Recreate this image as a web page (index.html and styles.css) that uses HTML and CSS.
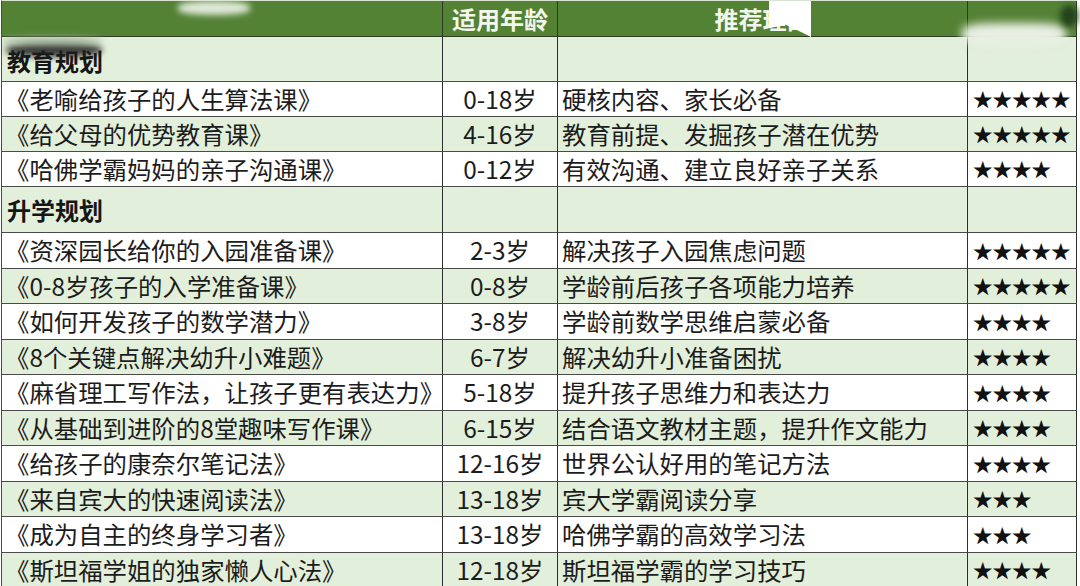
FILE: index.html
```html
<!DOCTYPE html>
<html lang="zh-CN">
<head>
<meta charset="utf-8">
<title>课程推荐表</title>
<link rel="stylesheet" href="styles.css">
</head>
<body>
<div class="sheet">
  <div class="row head">
    <div class="cell"></div>
    <div class="cell c">适用年龄</div>
    <div class="cell c">推荐理由</div>
    <div class="cell"></div>
  </div>

  <div class="row sec first">
    <div class="cell t">教育规划</div>
    <div class="cell"></div>
    <div class="cell"></div>
    <div class="cell"></div>
  </div>
  <div class="row r1 w">
    <div class="cell n">《老喻给孩子的人生算法课》</div>
    <div class="cell c">0-18岁</div>
    <div class="cell d">硬核内容、家长必备</div>
    <div class="cell s">★★★★★</div>
  </div>
  <div class="row r1 g">
    <div class="cell n">《给父母的优势教育课》</div>
    <div class="cell c">4-16岁</div>
    <div class="cell d">教育前提、发掘孩子潜在优势</div>
    <div class="cell s">★★★★★</div>
  </div>
  <div class="row r1 w">
    <div class="cell n">《哈佛学霸妈妈的亲子沟通课》</div>
    <div class="cell c">0-12岁</div>
    <div class="cell d">有效沟通、建立良好亲子关系</div>
    <div class="cell s">★★★★</div>
  </div>

  <div class="row sec">
    <div class="cell t">升学规划</div>
    <div class="cell"></div>
    <div class="cell"></div>
    <div class="cell"></div>
  </div>
  <div class="row r2 w">
    <div class="cell n">《资深园长给你的入园准备课》</div>
    <div class="cell c">2-3岁</div>
    <div class="cell d">解决孩子入园焦虑问题</div>
    <div class="cell s">★★★★★</div>
  </div>
  <div class="row r2 g">
    <div class="cell n">《0-8岁孩子的入学准备课》</div>
    <div class="cell c">0-8岁</div>
    <div class="cell d">学龄前后孩子各项能力培养</div>
    <div class="cell s">★★★★★</div>
  </div>
  <div class="row r2 w">
    <div class="cell n">《如何开发孩子的数学潜力》</div>
    <div class="cell c">3-8岁</div>
    <div class="cell d">学龄前数学思维启蒙必备</div>
    <div class="cell s">★★★★</div>
  </div>
  <div class="row r2 g">
    <div class="cell n">《8个关键点解决幼升小难题》</div>
    <div class="cell c">6-7岁</div>
    <div class="cell d">解决幼升小准备困扰</div>
    <div class="cell s">★★★★</div>
  </div>
  <div class="row r2 w">
    <div class="cell n">《麻省理工写作法，让孩子更有表达力》</div>
    <div class="cell c">5-18岁</div>
    <div class="cell d">提升孩子思维力和表达力</div>
    <div class="cell s">★★★★</div>
  </div>
  <div class="row r2 g">
    <div class="cell n">《从基础到进阶的8堂趣味写作课》</div>
    <div class="cell c">6-15岁</div>
    <div class="cell d">结合语文教材主题，提升作文能力</div>
    <div class="cell s">★★★★</div>
  </div>
  <div class="row r2 w">
    <div class="cell n">《给孩子的康奈尔笔记法》</div>
    <div class="cell c">12-16岁</div>
    <div class="cell d">世界公认好用的笔记方法</div>
    <div class="cell s">★★★★</div>
  </div>
  <div class="row r2 g">
    <div class="cell n">《来自宾大的快速阅读法》</div>
    <div class="cell c">13-18岁</div>
    <div class="cell d">宾大学霸阅读分享</div>
    <div class="cell s">★★★</div>
  </div>
  <div class="row r2 w">
    <div class="cell n">《成为自主的终身学习者》</div>
    <div class="cell c">13-18岁</div>
    <div class="cell d">哈佛学霸的高效学习法</div>
    <div class="cell s">★★★</div>
  </div>
  <div class="row r2 g">
    <div class="cell n">《斯坦福学姐的独家懒人心法》</div>
    <div class="cell c">12-18岁</div>
    <div class="cell d">斯坦福学霸的学习技巧</div>
    <div class="cell s">★★★★</div>
  </div>

  <div class="smudge sm-a"></div>
  <div class="smudge sm-b"></div>
  <div class="smudge sm-c"></div>
  <div class="smudge sm-d"></div>
  <div class="smudge sm-e"></div>
  <div class="smudge sm-f"></div>
</div>
</body>
</html>
```

FILE: styles.css
```css
html, body {
  margin: 0;
  padding: 0;
  background: #ffffff;
}

body {
  width: 1080px;
  height: 586px;
  overflow: hidden;
  font-family: "Noto Sans CJK SC", "Noto Sans", sans-serif;
  color: #1c1c1c;
}

.sheet {
  position: relative;
  width: 1076px;
  margin-left: 1px;
  border-left: 1px solid #4a4a4a;
  border-top: 1px solid #d9e3d2;
  box-sizing: border-box;
  display: flex;
  flex-direction: column;
}

.row {
  display: grid;
  grid-template-columns: 441px 115px 410px 109px;
  box-sizing: border-box;
  border-bottom: 1px solid #4a4a4a;
}

.cell {
  box-sizing: border-box;
  border-right: 1px solid #2e2e2e;
  display: flex;
  align-items: center;
  font-size: 24.4px;
  line-height: 1;
  white-space: nowrap;
  overflow: hidden;
}

.head {
  height: 36px;
  background: #548235;
  border-bottom-color: #2d3b24;
}

.head .cell {
  color: #f3f6ec;
  font-weight: bold;
  font-size: 24px;
  border-right-color: #2b3a22;
}

.sec {
  height: 46px;
  background: #e2efda;
}

.sec.first {
  height: 45px;
}

.sec .t {
  font-weight: bold;
  font-size: 24px;
  padding-left: 5px;
  color: #161616;
}

.sec.first .t {
  align-items: flex-end;
  padding-bottom: 8px;
}

.r1 { height: 35px; }
.r2 { height: 35.5px; }

.w { background: #ffffff; }
.g { background: #e2efda; }

.c {
  justify-content: center;
}

.n {
  padding-left: 3px;
}

.d {
  padding-left: 4px;
}

.s {
  padding-left: 5px;
  font-family: "Noto Sans CJK SC", sans-serif;
  font-size: 19.5px;
  color: #111111;
}

/* blurred watermark remnants over the header */
.smudge {
  position: absolute;
  pointer-events: none;
}

.sm-a {
  left: 176px;
  top: 0;
  width: 72px;
  height: 14px;
  background: #dfe9d8;
  border-radius: 40%;
  filter: blur(3px);
}

.sm-b {
  left: 767px;
  top: 0;
  width: 42px;
  height: 36px;
  background: #ffffff;
  clip-path: polygon(0 0, 100% 0, 100% 100%, 80% 88%, 40% 66%, 0 76%);
  filter: blur(0.6px);
}

.sm-c {
  left: 960px;
  top: 22px;
  width: 104px;
  height: 22px;
  background: #e9efe4;
  border-radius: 30%;
  filter: blur(4px);
}

.sm-d {
  left: 1058px;
  top: 4px;
  width: 18px;
  height: 22px;
  background: #24421a;
  border-radius: 50%;
  filter: blur(3px);
}

.sm-e {
  left: 4px;
  top: 42px;
  width: 96px;
  height: 14px;
  background: #1e1e1e;
  border-radius: 40%;
  filter: blur(3px);
  opacity: 0.85;
}

.sm-f {
  left: 0;
  top: 36px;
  width: 100px;
  height: 8px;
  background: #9db295;
  border-radius: 40%;
  filter: blur(3px);
  opacity: 0.7;
}
```
